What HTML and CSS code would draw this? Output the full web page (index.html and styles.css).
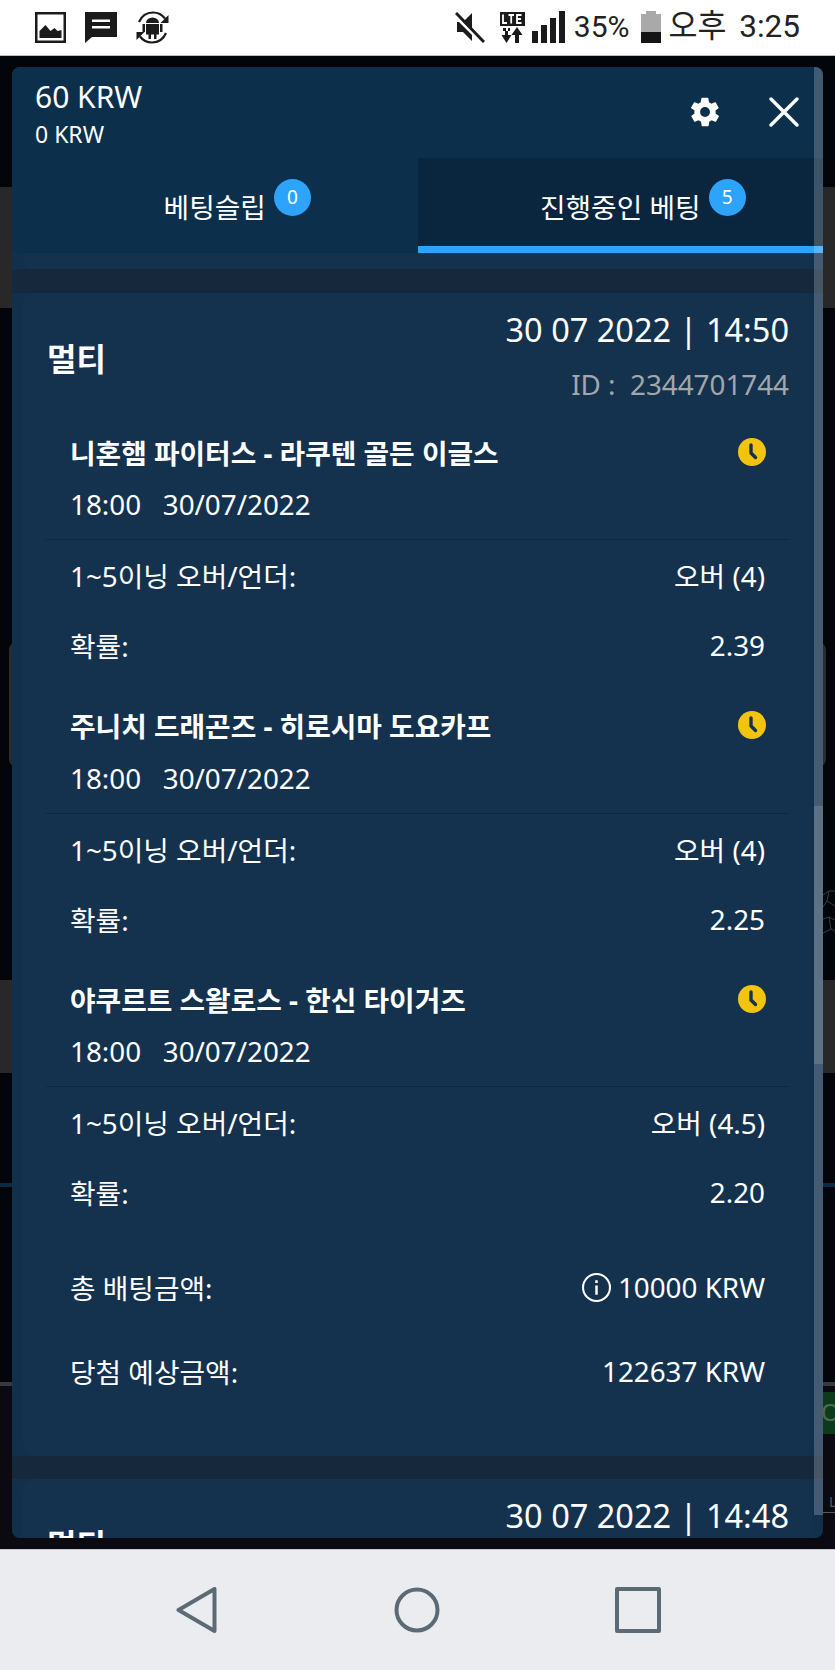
FILE: index.html
```html
<!DOCTYPE html>
<html lang="ko">
<head>
    <meta charset="UTF-8">
    <meta name="viewport" content="width=device-width, initial-scale=1.0">
    <title>진행중인 베팅</title>
    <link rel="stylesheet" href="styles.css">
</head>
<body>
    <div class="status-bar">
        <div class="status-left">
            <svg class="ic-image" viewBox="0 0 31 31"><path fill="#1b1b1b" d="M0 0h31v31H0z"/><path fill="#fff" d="M2.5 2.5h26v26h-26z"/><path fill="#1b1b1b" d="M4.5 26v-7l6-6 5 6 4-3 3 3 4-1v8z"/></svg>
            <svg class="ic-msg" viewBox="0 0 32 31"><path fill="#1b1b1b" d="M0 0h32v25H7l-7 6z"/><path fill="#fff" d="M7 7.500h18v2.500H7zM7 14h18v2.500H7z"/></svg>
            <svg class="ic-sync" viewBox="0 0 33 33">
                <path fill="none" stroke="#1b1b1b" stroke-width="2.200" d="M3 11C6 4 12 1.500 17 1.500c5 0 9 2 12 6M30 22c-3 7-9 9.500-14 9.500-5 0-9-2-12-6"/>
                <path fill="#1b1b1b" d="M32.500 4v8h-8zM.5 29v-8h8z"/>
                <path fill="#1b1b1b" d="M10 12a6.500 5.500 0 0 1 13 0zM10 13h13v10.500h-2.500V28h-2.500v-4.500h-3V28h-2.500v-4.500H10zM6.500 13h2.500v8H6.500zM24 13h2.500v8H24z"/>
            </svg>
        </div>
        <div class="status-right">
            <svg class="ic-mute" viewBox="0 0 30 31"><path fill="#1b1b1b" d="M2 10h6l9-9v28l-9-9H2z"/><path fill="#fff" d="M-2 0 29 31l-2 2L-4 2z"/><path stroke="#1b1b1b" stroke-width="3" d="M1 1l28 29"/></svg>
            <svg class="ic-lte" viewBox="0 0 25 31">
                <path fill="#1b1b1b" d="M0 0h25v14H0z"/>
                <path fill="none" stroke="#fff" stroke-width="1.800" d="M3 2.500V11h4M8.500 3H14M11.200 3v8.500M21.500 3H17v8h4.500M17 7h4"/>
                <path fill="#1b1b1b" d="M3 16h3v3h2v-3h2v3H8v4h3.500L6.500 31l-5-8H5v-4H3zM15 31v-8h-3.500l5.500-8 5.500 8H19v8z"/>
            </svg>
            <svg class="ic-signal" viewBox="0 0 33 32"><path fill="#1b1b1b" d="M0 20h6v12H0zM9 14h6v18H9zM18 7h6v25h-6zM27 0h6v32h-6z"/></svg>
            <span class="status-text pct">35%</span>
            <svg class="ic-battery" viewBox="0 0 20 32"><path fill="#a9a9a9" d="M5 0h10v3h5v18H0V3h5z"/><path fill="#141414" d="M0 21h20v11H0z"/></svg>
            <span class="status-text clock">오후 3:25</span>
        </div>
    </div>

    <div class="screen">
        <div class="backdrop">
            <div class="bg-gap h131"></div>
            <div class="bg-band h121"></div>
            <div class="bg-gap h334"></div>
            <div class="bg-ghost"></div>
            <div class="bg-gap h213 with-net">
                <svg class="net" viewBox="0 0 12 50"><path fill="none" stroke="#3a3d42" d="M0 6 6 2h6M6 2l-2 10 8 5M4 12 0 18M0 30l6-2 6 3M6 28l2 12-8 4M8 40l4 2"/></svg>
            </div>
            <div class="bg-band h93"></div>
            <div class="bg-gap h110"></div>
            <div class="bg-line-blue"></div>
            <div class="bg-gap h195"></div>
            <div class="bg-line-grey"></div>
            <div class="bg-bottom">
                <div class="bg-green">O</div>
                <div class="bg-label">L</div>
            </div>
        </div>

        <div class="modal">
            <div class="modal-head">
                <div>
                    <div class="balance">60 KRW</div>
                    <div class="bonus">0 KRW</div>
                </div>
                <div class="head-actions">
                    <svg class="ic-gear" viewBox="0 0 24 24"><path fill="#fff" fill-rule="evenodd" d="M19.400 13c.1-.3.100-.7.100-1s0-.7-.1-1l2.100-1.600c.2-.2.200-.4.100-.6l-2-3.500c-.1-.2-.4-.3-.6-.2l-2.500 1c-.5-.4-1.100-.7-1.700-1l-.4-2.700c0-.2-.2-.4-.5-.4h-4c-.2 0-.4.200-.5.400l-.4 2.700c-.6.300-1.200.6-1.700 1l-2.500-1c-.2-.1-.5 0-.6.200l-2 3.500c-.1.200-.1.400.1.600L4.600 11c-.1.300-.1.700-.1 1s0 .7.100 1l-2.100 1.600c-.2.200-.2.400-.1.600l2 3.500c.1.200.4.300.6.200l2.500-1c.5.400 1.100.7 1.700 1l.4 2.700c0 .2.300.4.500.4h4c.3 0 .5-.2.500-.4l.4-2.700c.6-.3 1.200-.6 1.700-1l2.500 1c.2.100.5 0 .6-.2l2-3.500c.1-.2.100-.4-.1-.6zM12 15.500a3.500 3.500 0 1 1 0-7 3.500 3.500 0 0 1 0 7z"/></svg>
                    <svg class="ic-close" viewBox="0 0 30 30"><path fill="none" stroke="#fff" stroke-width="3.400" stroke-linecap="round" d="M2 2l26 26M28 2 2 28"/></svg>
                </div>
            </div>
            <div class="tabs">
                <div class="tab-item">
                    <span class="tab-label">베팅슬립<span class="badge">0</span></span>
                </div>
                <div class="tab-item active">
                    <span class="tab-label">진행중인 베팅<span class="badge">5</span></span>
                </div>
            </div>

            <div class="scroll-area">
                <div class="card-wrap prev"><div class="bet-card stub"></div></div>

                <div class="card-wrap">
                    <div class="bet-card">
                        <div class="bet-head">
                            <div class="bet-type">멀티</div>
                            <div class="bet-meta">
                                <div class="bet-date">30 07 2022 | 14:50</div>
                                <div class="bet-id">ID :&nbsp;&nbsp;2344701744</div>
                            </div>
                        </div>

                        <div class="leg">
                            <div class="leg-title">
                                <span>니혼햄 파이터스 - 라쿠텐 골든 이글스</span>
                                <svg class="ic-clock" viewBox="0 0 28 28"><circle cx="14" cy="14" r="14" fill="#f2c40f"/><path fill="none" stroke="#14324e" stroke-width="3.400" stroke-linecap="round" d="M13 7v8l4.500 4.500"/></svg>
                            </div>
                            <div class="leg-time">18:00&nbsp;&nbsp; 30/07/2022</div>
                            <div class="row"><span>1~5이닝 오버/언더:</span><span>오버 (4)</span></div>
                            <div class="row"><span>확률:</span><span>2.39</span></div>
                        </div>

                        <div class="leg">
                            <div class="leg-title">
                                <span>주니치 드래곤즈 - 히로시마 도요카프</span>
                                <svg class="ic-clock" viewBox="0 0 28 28"><circle cx="14" cy="14" r="14" fill="#f2c40f"/><path fill="none" stroke="#14324e" stroke-width="3.400" stroke-linecap="round" d="M13 7v8l4.500 4.500"/></svg>
                            </div>
                            <div class="leg-time">18:00&nbsp;&nbsp; 30/07/2022</div>
                            <div class="row"><span>1~5이닝 오버/언더:</span><span>오버 (4)</span></div>
                            <div class="row"><span>확률:</span><span>2.25</span></div>
                        </div>

                        <div class="leg">
                            <div class="leg-title">
                                <span>야쿠르트 스왈로스 - 한신 타이거즈</span>
                                <svg class="ic-clock" viewBox="0 0 28 28"><circle cx="14" cy="14" r="14" fill="#f2c40f"/><path fill="none" stroke="#14324e" stroke-width="3.400" stroke-linecap="round" d="M13 7v8l4.500 4.500"/></svg>
                            </div>
                            <div class="leg-time">18:00&nbsp;&nbsp; 30/07/2022</div>
                            <div class="row"><span>1~5이닝 오버/언더:</span><span>오버 (4.5)</span></div>
                            <div class="row"><span>확률:</span><span>2.20</span></div>
                        </div>

                        <div class="summary">
                            <div class="sum-row">
                                <span>총 배팅금액:</span>
                                <span class="sum-value">
                                    <svg class="ic-info" viewBox="0 0 28 28"><circle cx="14" cy="14" r="13" fill="none" stroke="#fff" stroke-width="2"/><path fill="#fff" d="M12.800 12h2.400v9h-2.400zM12.800 7h2.400v2.600h-2.400z"/></svg>
                                    10000 KRW
                                </span>
                            </div>
                            <div class="sum-row"><span>당첨 예상금액:</span><span>122637 KRW</span></div>
                        </div>
                    </div>
                </div>

                <div class="card-wrap">
                    <div class="bet-card">
                        <div class="bet-head">
                            <div class="bet-type">멀티</div>
                            <div class="bet-meta">
                                <div class="bet-date">30 07 2022 | 14:48</div>
                            </div>
                        </div>
                    </div>
                </div>
            </div>

            <div class="scrollbar"><div class="scroll-thumb"></div></div>
        </div>
    </div>

    <div class="nav-bar">
        <svg class="nav-icon" viewBox="0 0 46 46"><path fill="none" stroke="#5c6a76" stroke-width="4" stroke-linejoin="round" d="M41.500 2v42L5.500 23z"/></svg>
        <svg class="nav-icon" viewBox="0 0 46 46"><circle cx="23" cy="23" r="20.500" fill="none" stroke="#5c6a76" stroke-width="4"/></svg>
        <svg class="nav-icon" viewBox="0 0 46 46"><path fill="none" stroke="#5c6a76" stroke-width="4" stroke-linejoin="round" d="M2 2h42v42H2z"/></svg>
    </div>
</body>
</html>
```

FILE: styles.css
```css
* {
    box-sizing: border-box;
}
html, body {
    margin: 0;
    padding: 0;
}
body {
    width: 835px;
    height: 1670px;
    overflow: hidden;
    display: flex;
    flex-direction: column;
    font-family: "Noto Sans", "Noto Sans CJK KR", sans-serif;
    color: #fff;
    background: #020509;
}
svg {
    display: block;
    flex-shrink: 0;
}

/* status bar */
.status-bar {
    height: 56px;
    flex-shrink: 0;
    display: flex;
    align-items: center;
    justify-content: space-between;
    padding: 0 35px 1px;
    background: #fff;
    border-bottom: 1px solid #bdbdbd;
}
.status-left, .status-right {
    display: flex;
    align-items: center;
}
.ic-image { width: 31px; height: 31px; }
.ic-msg { width: 32px; height: 31px; margin-left: 19px; }
.ic-sync { width: 33px; height: 33px; margin-left: 19px; }
.ic-mute { width: 30px; height: 31px; }
.ic-lte { width: 25px; height: 31px; margin-left: 15px; }
.ic-signal { width: 33px; height: 32px; margin-left: 7px; }
.ic-battery { width: 20px; height: 32px; margin-left: 12px; }
.status-text {
    font-family: Roboto, "Noto Sans CJK KR", sans-serif;
    font-size: 30px;
    line-height: 36px;
    color: #222;
    white-space: nowrap;
}
.status-text.pct {
    margin-left: 9px;
}
.status-text.clock {
    font-size: 31.500px;
    word-spacing: 5px;
    margin-left: 7px;
}

/* dim page behind the modal */
.screen {
    position: relative;
    flex: 1;
    overflow: hidden;
}
.bg-gap { background: #020509; }
.bg-band { background: #282828; }
.h131 { height: 131px; }
.h121 { height: 121px; }
.h334 { height: 334px; }
.h213 { height: 213px; }
.h93 { height: 93px; }
.h110 { height: 110px; }
.h195 { height: 195px; }
.bg-ghost {
    height: 125px;
    margin: 0 9px;
    border-radius: 8px;
    background: #2a2c2e;
}
.with-net {
    display: flex;
    justify-content: flex-end;
    padding-top: 122px;
}
.net {
    width: 12px;
    height: 50px;
}
.bg-line-blue {
    height: 4px;
    background: #0b2a44;
}
.bg-line-grey {
    height: 4px;
    background: #38393b;
}
.bg-bottom {
    height: 167px;
    background: #0a0a10;
    display: flex;
    flex-direction: column;
    align-items: flex-end;
    padding-top: 6px;
}
.bg-green {
    width: 14px;
    height: 42px;
    background: #0c3a1a;
    color: #4c6a50;
    font-size: 24px;
    line-height: 40px;
}
.bg-label {
    width: 12px;
    margin-top: 58px;
    padding-left: 6px;
    font-size: 14px;
    line-height: 20px;
    color: #55585c;
    border-bottom: 1px solid #55585c;
}

/* modal */
.modal {
    position: absolute;
    left: 12px;
    top: 11px;
    width: 811px;
    height: 1471px;
    display: flex;
    flex-direction: column;
    overflow: hidden;
    border-radius: 8px;
    background: #16293c;
}
.modal-head {
    height: 91px;
    flex-shrink: 0;
    display: flex;
    justify-content: space-between;
    padding: 11px 24px 4px 23px;
    background: #0c304b;
}
.balance {
    font-size: 30px;
    line-height: 38px;
}
.bonus {
    font-size: 23px;
    line-height: 37px;
}
.head-actions {
    display: flex;
    align-items: center;
    padding-bottom: 9px;
}
.ic-gear { width: 34px; height: 34px; margin-right: 47px; }
.ic-close { width: 30px; height: 30px; }

.tabs {
    height: 95px;
    flex-shrink: 0;
    display: flex;
}
.tab-item {
    flex: 1;
    display: flex;
    align-items: center;
    justify-content: center;
    padding-top: 3px;
    background: #0c304b;
}
.tab-item.active {
    background: #0a253e;
    border-bottom: 7px solid #2ea3fc;
    padding-top: 10px;
}
.tab-label {
    position: relative;
    font-size: 27.800px;
    line-height: 40px;
}
.badge {
    position: absolute;
    left: calc(100% + 8px);
    top: -8px;
    width: 37px;
    height: 37px;
    border-radius: 50%;
    background: #2ea3fc;
    font-size: 19px;
    line-height: 37px;
    text-align: center;
}

.scroll-area {
    flex: 1;
    overflow: hidden;
}
.card-wrap {
    padding: 0 11px;
    margin-bottom: 23px;
    background: #12304b;
}
.card-wrap.prev {
    margin-bottom: 24px;
}
.bet-card {
    border-radius: 10px;
    background: #14324e;
    padding: 0 0 43px;
}
.bet-card.stub {
    height: 16px;
    padding: 0;
    border-radius: 0 0 10px 10px;
}
.bet-head {
    height: 131px;
    display: flex;
    align-items: center;
    justify-content: space-between;
    padding: 0 23px 0 24px;
}
.bet-type {
    font-size: 32px;
    font-weight: 700;
    margin-bottom: 3px;
}
.bet-meta {
    align-self: flex-start;
    padding-top: 11px;
    text-align: right;
}
.bet-date {
    font-size: 32.500px;
    line-height: 52px;
    white-space: nowrap;
}
.bet-id {
    font-size: 27.800px;
    line-height: 52px;
    margin-top: 2px;
    color: #a3a7aa;
}

.leg {
    padding-bottom: 17.700px;
}
.leg-title {
    height: 55px;
    display: flex;
    align-items: center;
    justify-content: space-between;
    padding: 0 46px 0 47px;
    font-size: 27.800px;
    font-weight: 700;
}
.ic-clock { width: 28px; height: 28px; }
.leg-time {
    height: 61px;
    margin: 0 23px;
    padding: 1px 0 0 24px;
    font-size: 27.800px;
    line-height: 48px;
    border-bottom: 1px solid #10273d;
}
.row {
    height: 70px;
    display: flex;
    align-items: center;
    justify-content: space-between;
    padding: 0 47px;
    font-size: 27.800px;
}

.sum-row {
    height: 84px;
    display: flex;
    align-items: center;
    justify-content: space-between;
    padding: 0 47px;
    font-size: 27.800px;
}
.sum-value {
    display: flex;
    align-items: center;
    gap: 7px;
}
.ic-info { width: 29px; height: 29px; }

/* scrollbar over the modal */
.scrollbar {
    position: absolute;
    right: 0;
    top: 0;
    width: 9px;
    height: 1448px;
    background: rgba(255, 255, 255, .21);
}
.scroll-thumb {
    margin-top: 739px;
    height: 258px;
    background: rgba(255, 255, 255, .14);
}

/* navigation bar */
.nav-bar {
    height: 121px;
    flex-shrink: 0;
    display: flex;
    align-items: center;
    justify-content: center;
    gap: 175px;
    padding-right: 2px;
    background: #ebecf0;
    border-top: 1px solid #c9cacc;
}
.nav-icon {
    width: 46px;
    height: 46px;
}
```
